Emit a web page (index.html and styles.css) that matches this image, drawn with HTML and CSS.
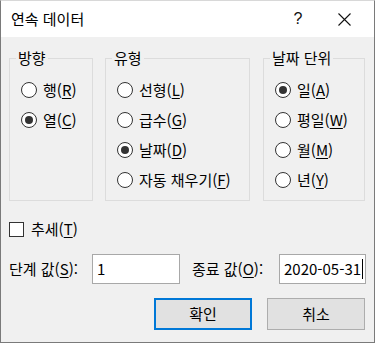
FILE: index.html
```html
<!DOCTYPE html>
<html lang="ko">
<head>
<meta charset="utf-8">
<link rel="stylesheet" href="styles.css">
</head>
<body>
<div class="dialog">
  <div class="titlebar">
    <span class="title">연속 데이터</span>
    <span class="help">?</span>
    <span class="close"><svg width="13" height="13" viewBox="0 0 13 13"><path d="M0.5 0.5L12.5 12.5M12.5 0.5L0.5 12.5" stroke="#111" stroke-width="1.1" fill="none"/></svg></span>
  </div>
  <div class="content">
    <div class="groups">
      <div class="group g1">
        <span class="legend">방향</span>
        <div class="opt"><span class="radio"></span><span>행(<u>R</u>)</span></div>
        <div class="opt"><span class="radio on"></span><span>열(<u>C</u>)</span></div>
      </div>
      <div class="group g2">
        <span class="legend">유형</span>
        <div class="opt"><span class="radio"></span><span>선형(<u>L</u>)</span></div>
        <div class="opt"><span class="radio"></span><span>급수(<u>G</u>)</span></div>
        <div class="opt"><span class="radio on"></span><span>날짜(<u>D</u>)</span></div>
        <div class="opt"><span class="radio"></span><span>자동 채우기(<u>F</u>)</span></div>
      </div>
      <div class="group g3">
        <span class="legend">날짜 단위</span>
        <div class="opt"><span class="radio on"></span><span>일(<u>A</u>)</span></div>
        <div class="opt"><span class="radio"></span><span>평일(<u>W</u>)</span></div>
        <div class="opt"><span class="radio"></span><span>월(<u>M</u>)</span></div>
        <div class="opt"><span class="radio"></span><span>년(<u>Y</u>)</span></div>
      </div>
    </div>
    <div class="trend"><span class="check"></span><span>추세(<u>T</u>)</span></div>
    <div class="values">
      <span class="lbl">단계 값(<u>S</u>):</span>
      <span class="field">1</span>
      <span class="lbl lbl2">종료 값(<u>O</u>):</span>
      <span class="field">2020-05-31<span class="caret"></span></span>
    </div>
    <div class="buttons">
      <span class="btn default">확인</span>
      <span class="btn">취소</span>
    </div>
  </div>
</div>
</body>
</html>
```
FILE: styles.css
```css
* { box-sizing: border-box; }
html, body { margin: 0; padding: 0; background: #f0f0f0; }
body {
  font-family: "Noto Sans CJK KR", "Noto Sans", sans-serif;
  font-size: 15px;
  color: #000;
}
.dialog {
  width: 375px;
  height: 343px;
  background: #f0f0f0;
  border: 1px solid #7a7a7a;
  border-top-color: #d8d8d8;
  display: flex;
  flex-direction: column;
}
.titlebar {
  height: 36px;
  background: #fff;
  display: flex;
  align-items: center;
  padding-left: 10px;
  flex: none;
}
.title { line-height: 20px; margin-top: -1px; }
.help {
  margin-left: auto;
  width: 46px;
  text-align: center;
  font-family: "Liberation Sans", sans-serif;
  font-size: 16px;
  line-height: 20px;
  color: #111;
}
.close {
  width: 46px;
  margin-right: 7px;
  display: flex;
  justify-content: center;
  align-items: center;
}
.content {
  padding: 0 9px 0 8px;
  display: flex;
  flex-direction: column;
}
.groups {
  margin-top: 21px;
  display: flex;
}
.group {
  position: relative;
  height: 143px;
  border: 1px solid #dcdcdc;
  padding: 16px 0 0 11px;
}
.g1 { width: 84px; }
.g2 { width: 145px; margin-left: 12px; }
.g3 { width: 102px; margin-left: 13px; }
.legend {
  position: absolute;
  top: -12px;
  left: 6px;
  padding: 0 2px;
  background: #f0f0f0;
  line-height: 22px;
}
.opt {
  height: 30px;
  display: flex;
  align-items: center;
  gap: 6px;
  white-space: nowrap;
  line-height: 20px;
}
u { text-decoration-thickness: 1px; text-underline-offset: 2px; }
.radio {
  width: 16px;
  height: 16px;
  border: 1px solid #333;
  border-radius: 50%;
  background: #fff;
  flex: none;
  display: flex;
  align-items: center;
  justify-content: center;
}
.radio.on::after {
  content: "";
  width: 8px;
  height: 8px;
  border-radius: 50%;
  background: #333;
}
.trend {
  margin-top: 13px;
  height: 30px;
  display: flex;
  align-items: center;
  gap: 7px;
  line-height: 20px;
}
.check {
  width: 15px;
  height: 15px;
  border: 1px solid #333;
  background: #fff;
  flex: none;
}
.values {
  margin-top: 10px;
  display: grid;
  grid-template-columns: 83px 88px 99px 87px;
  align-items: center;
  line-height: 20px;
}
.lbl { white-space: nowrap; }
.lbl2 { margin-left: 12px; }
.field {
  height: 30px;
  border: 1px solid #a8a8a8;
  background: #fff;
  padding-left: 4px;
  display: flex;
  align-items: center;
  white-space: nowrap;
}
.caret {
  display: inline-block;
  width: 1px;
  height: 20px;
  background: #000;
  margin-left: 1px;
}
.buttons {
  margin-top: 14px;
  display: flex;
  justify-content: flex-end;
  gap: 15px;
}
.btn {
  width: 98px;
  height: 32px;
  background: #e1e1e1;
  border: 1px solid #adadad;
  display: flex;
  align-items: center;
  justify-content: center;
  line-height: 20px;
}
.btn.default { border: 2px solid #0078d7; }
```
